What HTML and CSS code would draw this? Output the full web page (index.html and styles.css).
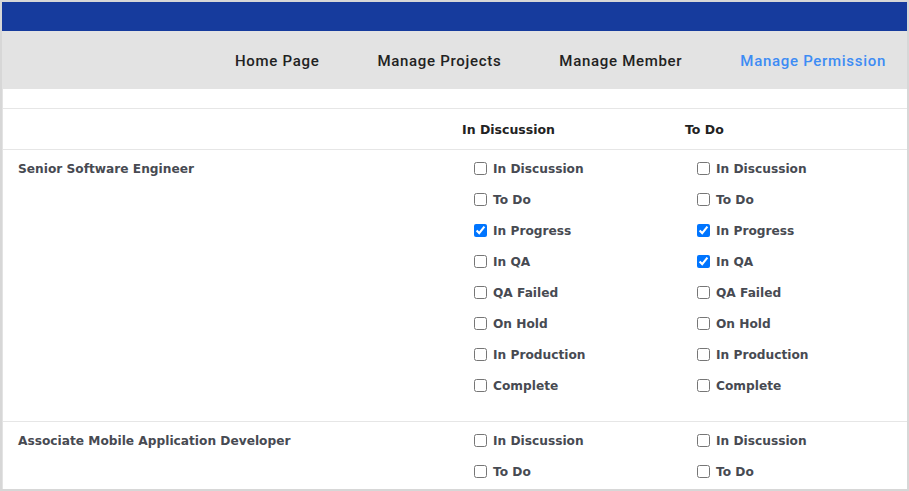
FILE: index.html
```html
<!DOCTYPE html>
<html>
<head>
<meta charset="utf-8">
<link rel="stylesheet" href="styles.css">
</head>
<body>
<div class="frame">
  <div class="topbar"></div>
  <nav class="nav">
    <a class="nav-link">Home Page</a>
    <a class="nav-link">Manage Projects</a>
    <a class="nav-link">Manage Member</a>
    <a class="nav-link active">Manage Permission</a>
  </nav>
  <div class="content">
    <div class="table">
      <div class="row head">
        <div class="cell role"></div>
        <div class="cell th">In Discussion</div>
        <div class="cell th">To Do</div>
      </div>
      <div class="row">
        <div class="cell role">Senior Software Engineer</div>
        <div class="cell checks">
          <label class="check"><input type="checkbox"><span>In Discussion</span></label>
          <label class="check"><input type="checkbox"><span>To Do</span></label>
          <label class="check"><input type="checkbox" checked><span>In Progress</span></label>
          <label class="check"><input type="checkbox"><span>In QA</span></label>
          <label class="check"><input type="checkbox"><span>QA Failed</span></label>
          <label class="check"><input type="checkbox"><span>On Hold</span></label>
          <label class="check"><input type="checkbox"><span>In Production</span></label>
          <label class="check"><input type="checkbox"><span>Complete</span></label>
        </div>
        <div class="cell checks">
          <label class="check"><input type="checkbox"><span>In Discussion</span></label>
          <label class="check"><input type="checkbox"><span>To Do</span></label>
          <label class="check"><input type="checkbox" checked><span>In Progress</span></label>
          <label class="check"><input type="checkbox" checked><span>In QA</span></label>
          <label class="check"><input type="checkbox"><span>QA Failed</span></label>
          <label class="check"><input type="checkbox"><span>On Hold</span></label>
          <label class="check"><input type="checkbox"><span>In Production</span></label>
          <label class="check"><input type="checkbox"><span>Complete</span></label>
        </div>
      </div>
      <div class="row">
        <div class="cell role">Associate Mobile Application Developer</div>
        <div class="cell checks">
          <label class="check"><input type="checkbox"><span>In Discussion</span></label>
          <label class="check"><input type="checkbox"><span>To Do</span></label>
        </div>
        <div class="cell checks">
          <label class="check"><input type="checkbox"><span>In Discussion</span></label>
          <label class="check"><input type="checkbox"><span>To Do</span></label>
        </div>
      </div>
    </div>
  </div>
</div>
</body>
</html>
```
FILE: styles.css
```css
html, body {
  margin: 0;
  padding: 0;
  background: #ffffff;
}
.frame {
  box-sizing: border-box;
  width: 909px;
  height: 491px;
  border: 2px solid #d7d7d7;
  overflow: hidden;
  background: #ffffff;
}
.topbar {
  height: 29px;
  background: #163b9d;
}
.nav {
  height: 58px;
  background: #e3e3e3;
  display: flex;
  justify-content: flex-end;
  align-items: center;
  gap: 58px;
  padding-right: 21px;
  padding-top: 2px;
  box-sizing: border-box;
  font-family: Roboto, "Liberation Sans", sans-serif;
  font-weight: 500;
  font-size: 15px;
  letter-spacing: 0.7px;
}
.nav-link {
  color: #222222;
  text-decoration: none;
}
.nav-link.active {
  color: #3d8cf4;
}
.content {
  border-left: 1px solid #e3e3e3;
  padding-top: 19px;
  font-family: "DejaVu Sans", sans-serif;
  font-weight: bold;
  font-size: 12.2px;
  color: #474a52;
}
.table {
  border-top: 1px solid #e6e6e6;
}
.row {
  display: grid;
  grid-template-columns: 445px 223px 1fr;
  border-bottom: 1px solid #e6e6e6;
}
.row.head {
  height: 40px;
  align-items: center;
}
.th {
  padding-left: 14px;
  font-size: 12.5px;
  color: #222222;
}
.role {
  padding-left: 15px;
  padding-top: 4px;
  line-height: 31px;
}
.checks {
  display: flex;
  flex-direction: column;
  padding: 3px 0 20px 26px;
}
.check {
  display: flex;
  align-items: center;
  height: 31px;
}
.check input {
  margin: 0 6px 0 0;
  width: 13px;
  height: 13px;
}
```
